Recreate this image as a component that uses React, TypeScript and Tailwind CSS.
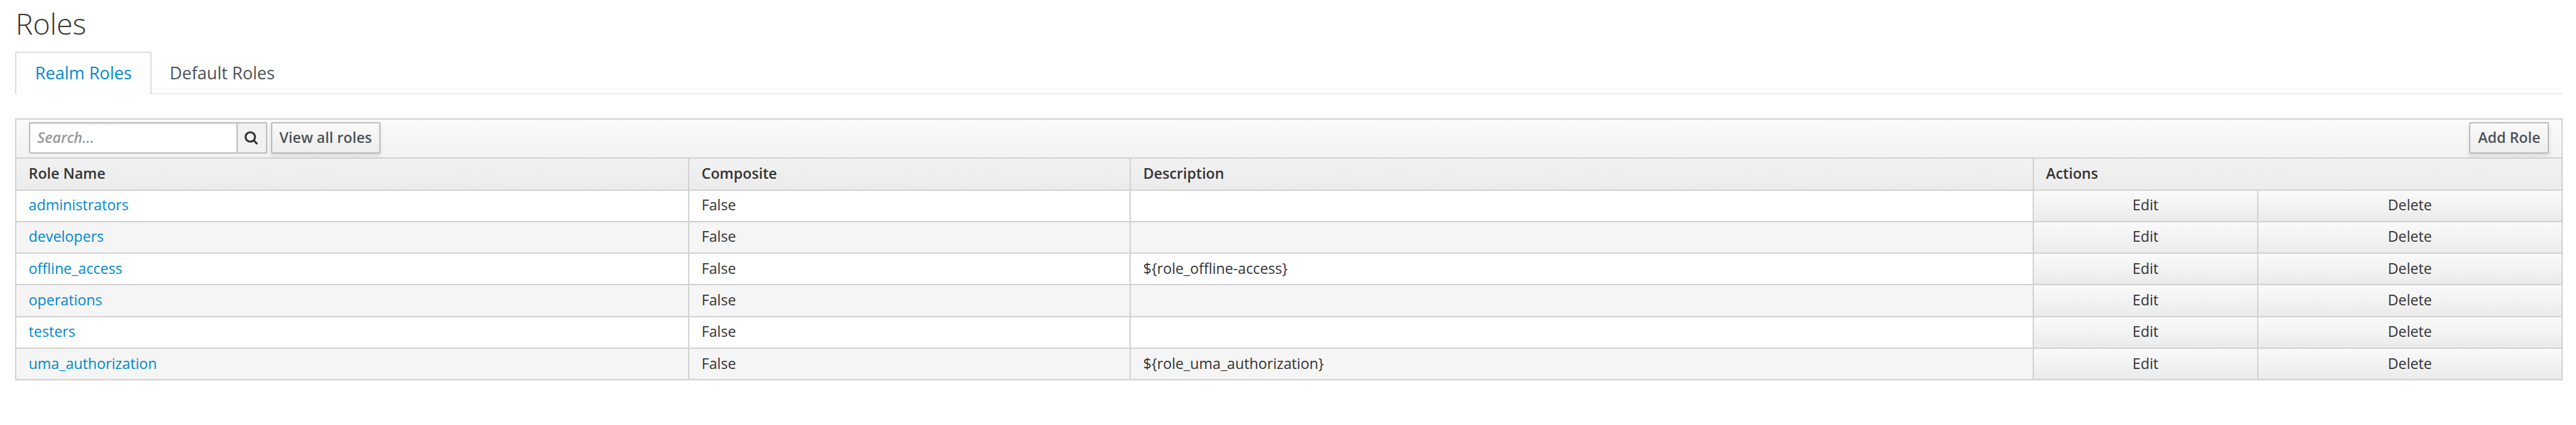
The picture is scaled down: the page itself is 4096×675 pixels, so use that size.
import React from "react";

type Role = { name: string; composite: string; description: string };

const roles: Role[] = [
  { name: "administrators", composite: "False", description: "" },
  { name: "developers", composite: "False", description: "" },
  { name: "offline_access", composite: "False", description: "${role_offline-access}" },
  { name: "operations", composite: "False", description: "" },
  { name: "testers", composite: "False", description: "" },
  { name: "uma_authorization", composite: "False", description: "${role_uma_authorization}" },
];

const line = "border-[#d1d1d1]";
const cell = "flex items-center pb-[3.2px] pl-[19.4px] border-r-2 " + line;
const actionCell =
  "flex items-center justify-center pb-[3.2px] bg-linear-to-b from-[#fafafa] to-[#ebebeb] " + line;
const columns = "grid grid-cols-[1069.9px_702.3px_1435.6px_357px_1fr]";
const button =
  "flex h-[50.3px] items-center justify-center rounded-[2px] border-2 border-[#bbbbbb] bg-linear-to-b from-[#fafafa] to-[#ededed] pb-[2px] font-semibold text-[#4d5258] shadow-[0_4px_6px_rgba(3,3,3,0.1)]";

export default function App() {
  return (
    <div className="h-[675px] w-[4096px] overflow-hidden bg-white pl-[24.2px] font-['Open_Sans',sans-serif] text-[23.22px] leading-[32px] text-[#333333]">
      <h1 className="h-[82.2px] pt-[12px] pl-[0.6px] text-[46.44px] leading-[50px] font-light">Roles</h1>

      <nav className="flex h-[67.8px] w-[4050.5px] text-[27.09px]">
        <a className="flex w-[217px] items-center justify-center rounded-t-[2px] border-2 border-b-0 border-[#dddddd] pb-[2px] text-[#0088ce]">
          Realm Roles
        </a>
        <a className="flex grow items-center border-b-2 border-[#ececec] pt-[2px] pl-[28.6px] text-[#4d5258]">
          Default Roles
        </a>
      </nav>

      <section className={"mt-[38.3px] w-[4050.5px] border-2 border-b-0 " + line}>
        <div className="bg-linear-to-b from-[#fafafa] to-[#ebebeb]">
          <div className={"flex h-[62px] items-start border-b-2 pt-[3.9px] pr-[19.4px] pl-[19.4px] " + line}>
            <div className="flex h-[50.3px] w-[379px] rounded-[2px] border-2 border-[#bbbbbb]">
              <input
                placeholder="Search..."
                className="min-w-0 grow bg-white pb-[2px] pl-[11.6px] shadow-[inset_0_2px_2px_rgba(3,3,3,0.075)] outline-none placeholder:font-semibold placeholder:text-[#999999] placeholder:italic"
              />
              <button className="flex w-[47px] items-center justify-center border-l-2 border-[#bbbbbb] bg-[#f1f1f1]">
                <svg viewBox="0 0 24 24" className="size-[24px]" fill="none" stroke="#333333" strokeWidth="3.2" strokeLinecap="round">
                  <circle cx="10" cy="10.5" r="7.5" />
                  <path d="M15.5 16l4.7 4.9" />
                </svg>
              </button>
            </div>
            <button className={button + " ml-[6.2px] w-[174.2px]"}>View all roles</button>
            <button className={button + " ml-auto w-[127px]"}>Add Role</button>
          </div>
          <div className={columns + " h-[50.3px] border-b-2 font-semibold " + line}>
            <div className={cell}>Role Name</div>
            <div className={cell}>Composite</div>
            <div className={cell}>Description</div>
            <div className="col-span-2 flex items-center pb-[3.2px] pl-[19.4px]">Actions</div>
          </div>
        </div>
        {roles.map((role) => (
          <div key={role.name} className={columns + " h-[50.31px] border-b-2 bg-white odd:bg-[#f5f5f5] " + line}>
            <div className={cell}>
              <a className="text-[#0088ce]">{role.name}</a>
            </div>
            <div className={cell}>{role.composite}</div>
            <div className={cell}>{role.description}</div>
            <div className={actionCell + " border-r-2"}>Edit</div>
            <div className={actionCell}>Delete</div>
          </div>
        ))}
      </section>
    </div>
  );
}
